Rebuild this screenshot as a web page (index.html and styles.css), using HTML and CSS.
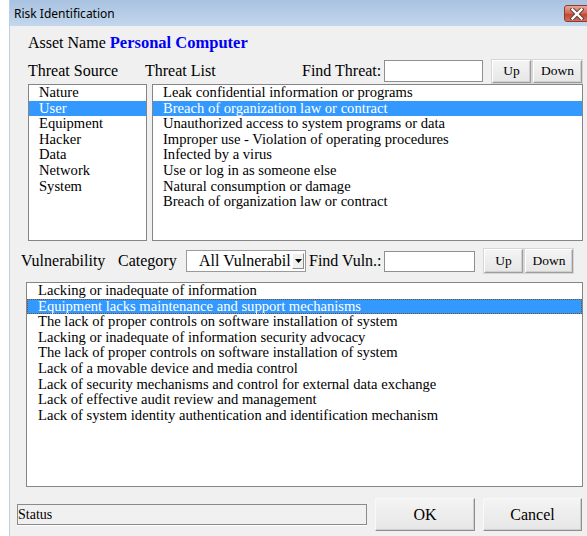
FILE: index.html
```html
<!DOCTYPE html>
<html lang="en">
<head>
<meta charset="utf-8">
<title>Risk Identification</title>
<link rel="stylesheet" href="styles.css">
</head>
<body>
<div class="window">
  <div class="titlebar">
    <span class="title">Risk Identification</span>
    <span class="close" aria-label="Close">
      <svg width="14" height="12" viewBox="0 0 14 12">
        <path d="M2.5 1.5 L11.5 10.5 M11.5 1.5 L2.5 10.5" stroke="#5b3a36" stroke-width="4.2" stroke-linecap="square" fill="none"/>
        <path d="M2.5 1.5 L11.5 10.5 M11.5 1.5 L2.5 10.5" stroke="#ffffff" stroke-width="2.4" stroke-linecap="square" fill="none"/>
      </svg>
    </span>
  </div>

  <div class="asset">Asset Name <b class="asset-name">Personal Computer</b></div>

  <div class="bar threat-bar">
    <span class="lbl lbl-source">Threat Source</span>
    <span class="lbl lbl-list">Threat List</span>
    <span class="lbl lbl-find">Find Threat:</span>
    <span class="field field-threat"></span>
    <button class="btn btn-up">Up</button>
    <button class="btn btn-down">Down</button>
  </div>

  <div class="threat-lists">
    <ul class="listbox source-list">
      <li>Nature</li>
      <li class="selected">User</li>
      <li>Equipment</li>
      <li>Hacker</li>
      <li>Data</li>
      <li>Network</li>
      <li>System</li>
    </ul>
    <ul class="listbox threat-list">
      <li>Leak confidential information or programs</li>
      <li class="selected">Breach of organization law or contract</li>
      <li>Unauthorized access to system programs or data</li>
      <li>Improper use - Violation of operating procedures</li>
      <li>Infected by a virus</li>
      <li>Use or log in as someone else</li>
      <li>Natural consumption or damage</li>
      <li>Breach of organization law or contract</li>
    </ul>
  </div>

  <div class="bar vuln-bar">
    <span class="lbl lbl-vuln">Vulnerability</span>
    <span class="lbl lbl-cat">Category</span>
    <span class="dropdown">
      <span class="dropdown-text">All Vulnerabil</span>
      <span class="dropdown-arrow"><svg width="7" height="4" viewBox="0 0 7 4"><path d="M0 0 H7 L3.5 4 Z" fill="#000"/></svg></span>
    </span>
    <span class="lbl lbl-findv">Find Vuln.:</span>
    <span class="field field-vuln"></span>
    <button class="btn btn-up">Up</button>
    <button class="btn btn-down btn-down-v">Down</button>
  </div>

  <div class="vuln-wrap">
    <ul class="listbox vuln-list">
      <li>Lacking or inadequate of information</li>
      <li class="selected focused">Equipment lacks maintenance and support mechanisms</li>
      <li>The lack of proper controls on software installation of system</li>
      <li>Lacking or inadequate of information security advocacy</li>
      <li>The lack of proper controls on software installation of system</li>
      <li>Lack of a movable device and media control</li>
      <li>Lack of security mechanisms and control for external data exchange</li>
      <li>Lack of effective audit review and management</li>
      <li>Lack of system identity authentication and identification mechanism</li>
    </ul>
  </div>

  <div class="footer">
    <span class="status">Status</span>
    <button class="btn btn-big">OK</button>
    <button class="btn btn-big btn-cancel">Cancel</button>
  </div>
</div>
</body>
</html>
```

FILE: styles.css
```css
html, body {
  margin: 0;
  overflow: hidden;
  background: #ffffff;
}

body {
  font-family: "Liberation Serif", "Times New Roman", serif;
  font-size: 14px;
  color: #000;
}

/* dialog frame */
.window {
  margin-left: 9px;
  height: 536px;
  background: #f0f0f0;
  border-left: 1px solid #b9d1ea;
  overflow: hidden;
}

.titlebar {
  height: 26px;
  display: flex;
  align-items: center;
  padding-left: 4px;
  background: linear-gradient(#a8c2e0, #c3d7ed);
  font-family: "Noto Sans", "DejaVu Sans", sans-serif;
  font-size: 12px;
}

.close {
  margin-left: auto;
  align-self: flex-start;
  margin-top: 5px;
  margin-right: -8px;
  width: 31px;
  height: 17px;
  border: 1px solid #8c3b30;
  border-radius: 3px;
  background: linear-gradient(#e9a999, #d0634f 50%, #c1412c 51%, #d5705a);
  display: flex;
  align-items: center;
  justify-content: center;
  box-sizing: border-box;
  padding-right: 6px;
}

.asset {
  margin: 7px 0 0 18px;
  height: 20px;
  line-height: 20px;
  font-size: 16px;
}

.asset-name {
  color: #0000f5;
  font-size: 16.5px;
}

/* control rows */
.bar {
  display: flex;
  align-items: center;
  font-size: 16px;
  white-space: nowrap;
}

.threat-bar {
  height: 24px;
  margin-top: 6px;
  padding-left: 18px;
}

.lbl-source { width: 117px; }
.lbl-list { width: 157px; }
.lbl-find { width: 82px; }

.field {
  display: block;
  background: #fff;
  border: 1px solid #8f8f8f;
  box-sizing: border-box;
}

.field-threat { width: 99px; height: 22px; }

.btn {
  font-family: inherit;
  font-size: 13.5px;
  color: #000;
  padding: 0;
  margin: 0;
  box-sizing: border-box;
  background: linear-gradient(#f4f4f4, #e6e6e6);
  border: 1px solid;
  border-color: #ffffff #9c9c9c #9c9c9c #ffffff;
  box-shadow: inset -1px -1px 0 #d0d0d0, 0 0 0 1px #d6d6d6;
  border-radius: 0;
}

.btn-up { width: 39px; height: 23px; margin-left: 9px; }
.btn-down { width: 49px; height: 23px; margin-left: 2px; }

/* lists */
.threat-lists {
  display: flex;
  gap: 5px;
  height: 157px;
  margin-top: 1px;
  padding-left: 18px;
  padding-right: 4px;
}

.listbox {
  list-style: none;
  margin: 0;
  padding: 0;
  background: #fff;
  border: 1px solid #858585;
  box-sizing: border-box;
  font-size: 14.6px;
  line-height: 15.6px;
  white-space: nowrap;
  overflow: hidden;
}

.listbox li {
  padding-left: 10px;
}

.listbox li.selected {
  background: #3399ff;
  color: #fff;
}

.source-list { width: 119px; }
.threat-list { flex: 1; }

.vuln-bar {
  height: 26px;
  margin-top: 7px;
  padding-left: 11px;
}

.lbl-vuln { width: 97px; }
.lbl-cat { width: 68px; }

.dropdown {
  width: 120px;
  height: 22px;
  display: flex;
  align-items: center;
  background: #fff;
  border: 1px solid #9a9a9a;
  box-sizing: border-box;
}

.dropdown-text {
  flex: 1;
  padding-left: 12px;
}

.dropdown-arrow {
  width: 12px;
  height: 16px;
  margin-right: 1px;
  display: flex;
  align-items: center;
  justify-content: center;
  background: #f0f0f0;
  border: 1px solid;
  border-color: #ffffff #8a8a8a #8a8a8a #ffffff;
  box-sizing: border-box;
}

.lbl-findv { width: 75px; margin-left: 3px; }
.field-vuln { width: 91px; height: 21px; }
.vuln-bar .btn { height: 24px; }
.btn-down-v { width: 48px; }

.vuln-wrap {
  margin-top: 8px;
  padding-left: 16px;
  padding-right: 4px;
}

.vuln-list {
  height: 205px;
}

.vuln-list li {
  padding-left: 11px;
}

.vuln-list li.focused {
  outline: 1px dotted #7a4f22;
  outline-offset: -1px;
}

/* status and dialog buttons */
.footer {
  display: flex;
  align-items: center;
  gap: 8px;
  height: 33px;
  margin-top: 11px;
  padding-left: 7px;
}

.status {
  width: 350px;
  height: 21px;
  line-height: 19px;
  box-sizing: border-box;
  border: 1px solid #8a8a8a;
  box-shadow: 0 1px 0 #ffffff;
  font-size: 14px;
  padding-left: 0;
}

.btn-big {
  width: 100px;
  height: 33px;
  font-size: 16px;
  box-shadow: inset -1px -1px 0 #cfcfcf;
  border-color: #f8f8f8 #8e8e8e #8e8e8e #f8f8f8;
}

.btn-cancel { width: 99px; }
```
